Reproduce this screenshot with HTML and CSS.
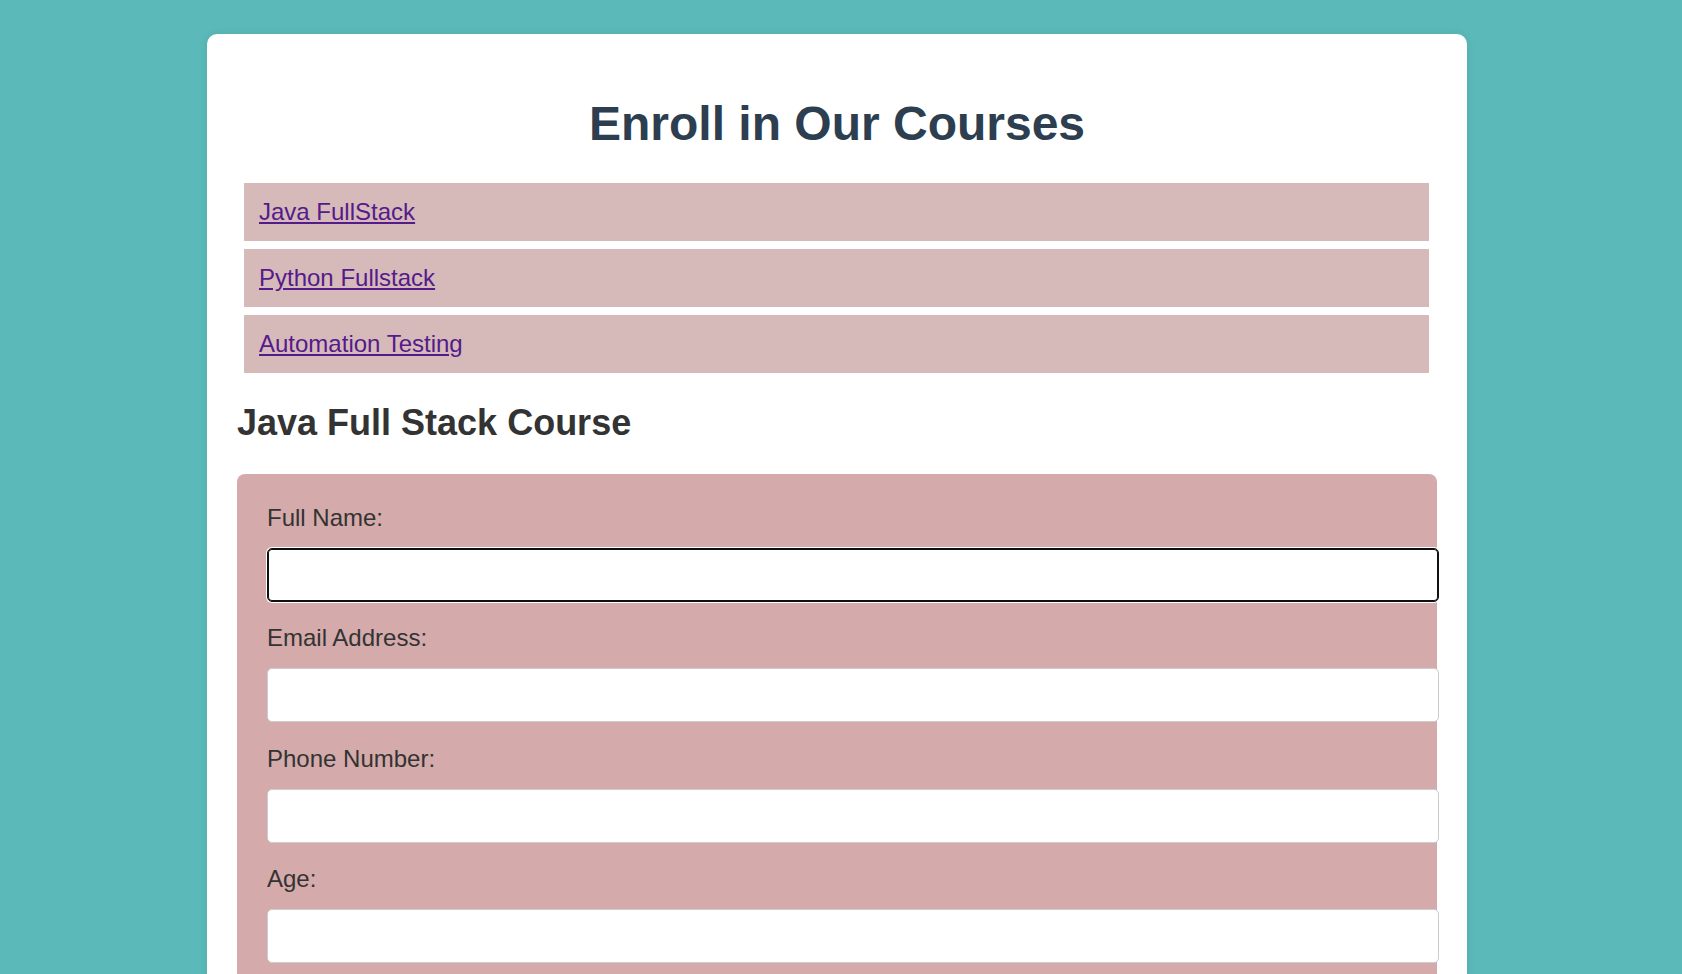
FILE: index.html
```html
<!DOCTYPE html>
<html lang="en">
<head>
<meta charset="utf-8">
<title>Enroll in Our Courses</title>
<link rel="stylesheet" href="styles.css">
</head>
<body>
<div class="card">
  <h1 class="title">Enroll in Our Courses</h1>
  <ul class="course-list">
    <li class="course-item"><a class="course-link" href="#java">Java FullStack</a></li>
    <li class="course-item"><a class="course-link" href="#python">Python Fullstack</a></li>
    <li class="course-item"><a class="course-link" href="#testing">Automation Testing</a></li>
  </ul>
  <h2 class="section-title" id="java">Java Full Stack Course</h2>
  <form class="enroll-form">
    <label class="field-label" for="name">Full Name:</label>
    <input class="field-input is-focused" type="text" id="name">
    <label class="field-label" for="email">Email Address:</label>
    <input class="field-input" type="email" id="email">
    <label class="field-label" for="phone">Phone Number:</label>
    <input class="field-input" type="tel" id="phone">
    <label class="field-label" for="age">Age:</label>
    <input class="field-input" type="number" id="age">
    <button class="submit-btn" type="button">Enroll Now</button>
  </form>
</div>
</body>
</html>
```
FILE: styles.css
```css
html, body {
  margin: 0;
  padding: 0;
}

body {
  background: #5bb9b9;
  font-family: "Liberation Sans", Arial, sans-serif;
  display: flex;
  justify-content: center;
  padding: 34px 8px 40px 0;
}

.card {
  width: 1200px;
  padding: 30px;
  background: #ffffff;
  border-radius: 10px;
  box-shadow: 0 0 8px rgba(0, 0, 0, 0.08);
}

.title {
  font-size: 48px;
  font-weight: bold;
  color: #2c3e50;
  text-align: center;
  margin: 32px 0;
}

.course-list {
  list-style: none;
  margin: 0;
  padding: 0;
}

.course-item {
  margin: 8px 8px 7.5px 7px;
  padding: 15px;
  background: #d6b9b9;
  font-size: 24px;
}

.course-link {
  color: #551a8b;
  text-decoration: underline;
}

.section-title {
  font-size: 36px;
  font-weight: bold;
  color: #333333;
  margin: 29px 0 29.5px;
}

.enroll-form {
  background: #d5aaaa;
  border-radius: 8px;
  padding: 30px;
}

.field-label {
  display: block;
  font-size: 24px;
  line-height: 27px;
  height: 27px;
  color: #333333;
  margin-bottom: 17px;
}

.field-input {
  display: block;
  box-sizing: content-box;
  width: 100%;
  height: 22px;
  padding: 15px;
  border: 1px solid #cccccc;
  border-radius: 5px;
  background: #ffffff;
  font-family: "Liberation Sans", Arial, sans-serif;
  font-size: 19px;
  margin: 0 0 22.5px 0;
  outline: none;
}

.field-input.is-focused {
  border-color: #101010;
  box-shadow: inset 0 0 0 1px #101010, 0 0 0 1px #ffffff;
}

.submit-btn {
  padding: 15px 30px;
  font-size: 20px;
  background: #2c3e50;
  color: #ffffff;
  border: none;
  border-radius: 5px;
}
```
